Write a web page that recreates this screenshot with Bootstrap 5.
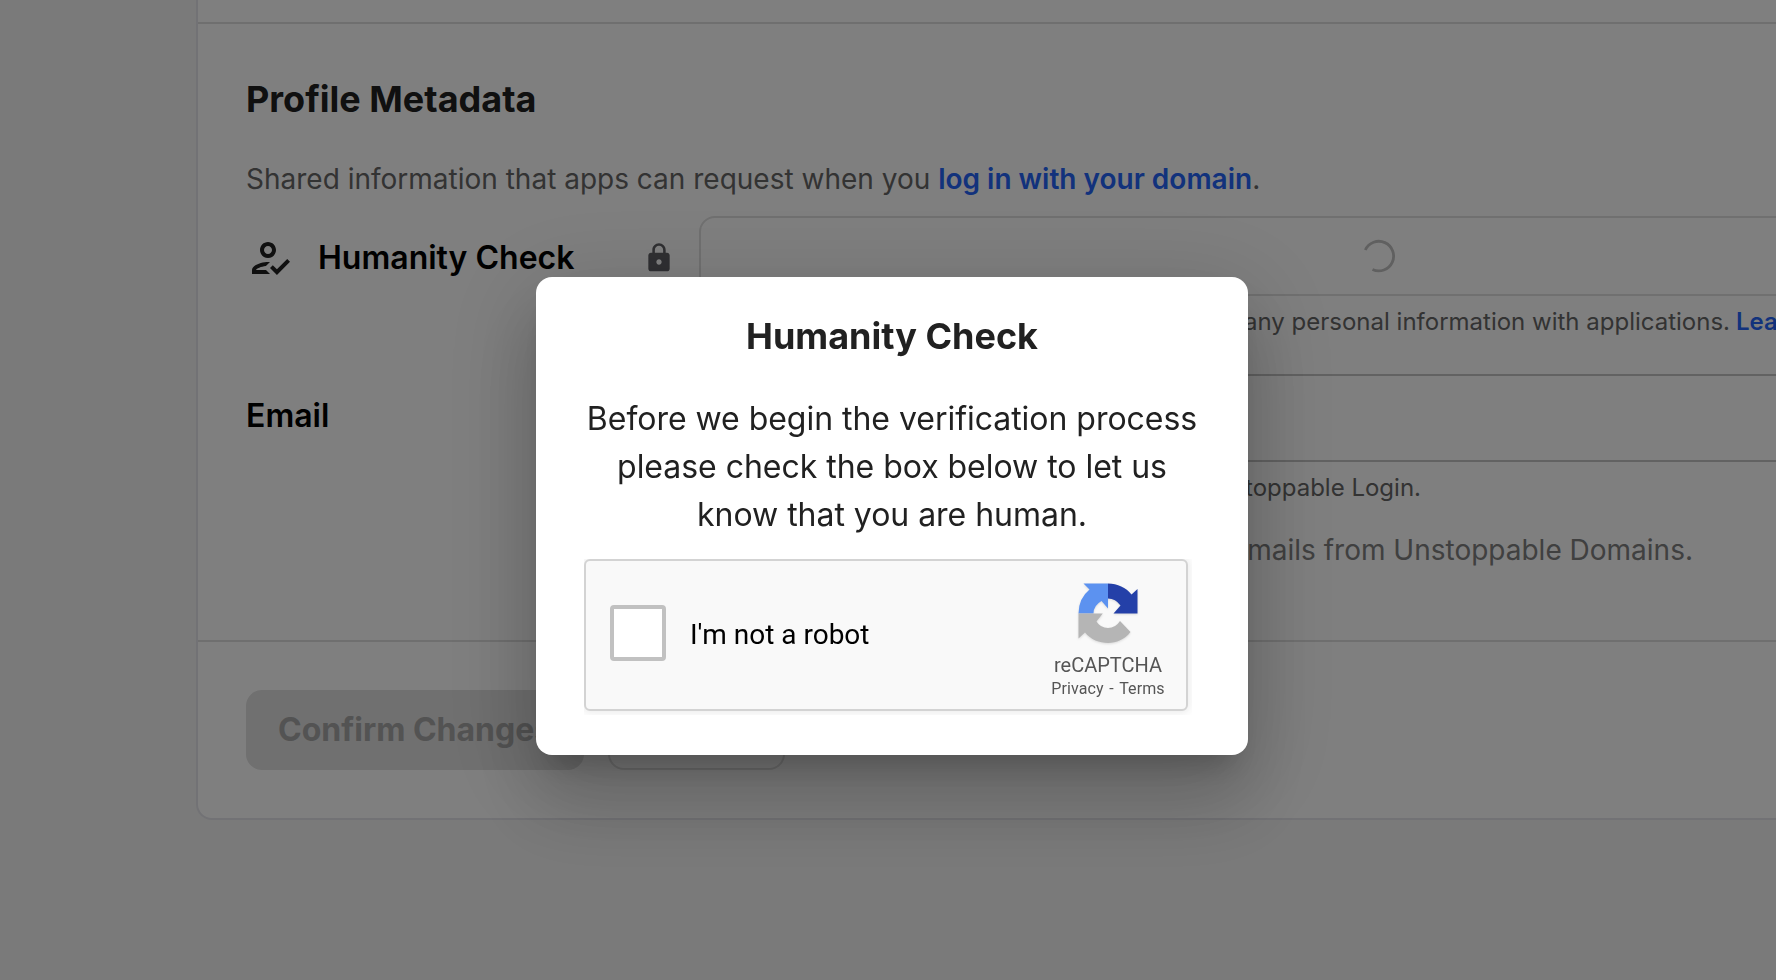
<!DOCTYPE html>
<html lang="en">
<head>
<meta charset="utf-8">
<title>Profile Metadata</title>
<meta name="viewport" content="width=device-width, initial-scale=1">
<link rel="stylesheet" href="https://cdn.jsdelivr.net/npm/bootstrap@5.3.0/dist/css/bootstrap.min.css">
<style>
  html, body { height: 100%; overflow: hidden; }
  body { font-family: Inter, "Liberation Sans", sans-serif; background: #f4f4f4; color: #212121; }
  .page { width: 2109px; padding-left: 196px; height: 980px; }
  .profile-card { border: 2px solid #e4e4ea; border-top: 0; border-radius: 0 0 16px 16px; background: #fff; height: 820px; }
  .prev-section { height: 24px; border-bottom: 2px solid #dfdfdf; }
  .meta-section { height: 618px; border-bottom: 2px solid #dfdfdf; padding: 48px 48px 0; }
  .section-title { font-size: 36px; line-height: 54px; font-weight: 700; }
  .intro { font-size: 28px; line-height: 42px; color: #666; margin: 32px 0 16px; white-space: nowrap; }
  .site-link { color: #2464f8; font-weight: 600; text-decoration: none; }
  .label-col { width: 453px; color: #000; font-size: 32px; line-height: 48px; font-weight: 600; flex: none; padding-top: 18px; }
  .label-name { margin-left: 24px; }
  .label-lock { margin-left: 69px; color: #5f5f64; }
  .check-field { height: 80px; border: 2px solid #e0e0e0; border-radius: 16px; }
  .email-row { margin-top: 32px; }
  .email-field { height: 88px; border: 2px solid #c4c4c4; border-radius: 8px; }
  .helper { font-size: 24px; line-height: 40px; color: #666; white-space: nowrap; padding-top: 6px; }
  .helper .site-link { margin-left: 6px; }
  .tail { flex: none; display: flex; justify-content: flex-end; }
  .consent { font-size: 28px; line-height: 42px; color: #808080; white-space: nowrap; margin-top: 21px; }
  .act { font-size: 32px; font-weight: 700; line-height: 48px; height: 80px; border-radius: 16px; padding: 0 32px; white-space: nowrap; }
  .act-main { width: 338px; background: #e0e0e0; color: #a6a6a6; }
  .act-alt { width: 177px; border: 2px solid #e0e0e0; color: #a6a6a6; }
  .scrim { background: rgba(0,0,0,.5); }
  .human-dialog { width: 712px; height: 478px; margin-top: 277px; margin-left: 536px; border-radius: 16px; background: #fff; padding: 32px 48px 0;
    box-shadow: 0 22px 30px -14px rgba(0,0,0,.2), 0 48px 76px 6px rgba(0,0,0,.14), 0 18px 92px 16px rgba(0,0,0,.12); }
  .dialog-title { font-size: 36px; line-height: 54px; font-weight: 700; margin: 0 0 32px; }
  .dialog-text { font-size: 32px; line-height: 48px; letter-spacing: -.03px; white-space: nowrap; margin: 0 0 20px; }
  .captcha-frame { width: 608px; height: 156px; overflow: hidden; font-family: Roboto, sans-serif; }
  .captcha-box { width: 604px; height: 152px; border: 2px solid #d3d3d3; border-radius: 6px; background: #f9f9f9; box-shadow: 0 0 8px 2px rgba(0,0,0,.08); padding-left: 24px; }
  .tick { width: 56px; height: 56px; border: 4px solid #c1c1c1; border-radius: 4px; background: #fff; margin-top: 44px; }
  .robot-label { font-size: 28px; line-height: 34px; color: #000; margin-left: 24px; }
  .brand-col { width: 116px; margin-right: 20px; color: #555; }
  .brand-logo { margin: 22px auto 0; filter: drop-shadow(0 1px 1px rgba(0,0,0,.12)); }
  .brand-name { font-size: 20px; line-height: 20px; margin-top: 11px; }
  .brand-links { font-size: 16px; line-height: 20px; white-space: nowrap; margin-top: 4px; letter-spacing: .12px; word-spacing: 1.5px; }
</style>
</head>
<body>
<div class="overflow-hidden w-100 h-100">
<main class="page">
  <div class="profile-card">
    <div class="prev-section"></div>
    <section class="meta-section">
      <h2 class="section-title mb-0">Profile Metadata</h2>
      <p class="intro">Shared information that apps can request when you <a class="site-link" href="#">log in with your domain</a>.</p>
      <div class="d-flex">
        <div class="label-col d-flex align-items-start">
          <svg width="48" height="48" viewBox="0 0 24 24" fill="#212121"><path d="M11 12c2.21 0 4-1.79 4-4s-1.79-4-4-4-4 1.79-4 4 1.79 4 4 4zm0-6c1.1 0 2 .9 2 2s-.9 2-2 2-2-.9-2-2 .9-2 2-2zm-1 12H5c.2-.63 2.57-1.68 4.96-1.94l2.04-2c-.39-.04-.68-.06-1-.06-2.67 0-8 1.34-8 4v2h9l-2-2zm10.6-5.5-5.13 5.17-2.07-2.08L12 17l3.47 3.5L22 13.91z"/></svg>
          <span class="label-name">Humanity Check</span>
          <svg class="label-lock mt-2" width="32" height="32" viewBox="0 0 24 24" fill="currentColor"><path d="M18 8h-1V6c0-2.76-2.24-5-5-5S7 3.24 7 6v2H6c-1.1 0-2 .9-2 2v10c0 1.1.9 2 2 2h12c1.1 0 2-.9 2-2V10c0-1.1-.9-2-2-2zm-6 9c-1.1 0-2-.9-2-2s.9-2 2-2 2 .9 2 2-.9 2-2 2zm3.1-9H8.9V6c0-1.71 1.39-3.1 3.1-3.1s3.1 1.39 3.1 3.1z"/></svg>
        </div>
        <div class="flex-grow-1">
          <div class="check-field d-flex align-items-center justify-content-center">
            <svg width="34" height="34" viewBox="0 0 34 34" fill="none" stroke="#c0c0c0" stroke-width="2.8"><path d="M3.3 11A14.8 14.8 0 1 1 10.5 30.5"/></svg>
          </div>
          <div class="helper d-flex">
            <span class="tail" style="width:1031px">Verify your identity without sharing any personal information with applications.</span>
            <a class="site-link" href="#">Learn more</a>
          </div>
        </div>
      </div>
      <div class="d-flex email-row">
        <div class="label-col">Email</div>
        <div class="flex-grow-1">
          <div class="email-field"></div>
          <div class="helper d-flex"><span class="tail" style="width:722px">Your email is used to sign in with Unstoppable Login.</span></div>
          <div class="consent d-flex"><span class="tail" style="width:994px">I want to receive emails from Unstoppable Domains.</span></div>
        </div>
      </div>
    </section>
    <div class="d-flex px-5 pt-5">
      <div class="act act-main d-flex align-items-center">Confirm Changes</div>
      <div class="act act-alt d-flex align-items-center ms-4">Cancel</div>
    </div>
  </div>
</main>
</div>
<div class="scrim position-fixed top-0 start-0 w-100 h-100">
  <div class="human-dialog" role="dialog">
    <h3 class="dialog-title text-center">Humanity Check</h3>
    <p class="dialog-text text-center">Before we begin the verification process<br>please check the box below to let us<br>know that you are human.</p>
    <div class="captcha-frame">
      <div class="captcha-box d-flex align-items-start">
        <div class="tick"></div>
        <span class="robot-label align-self-center">I'm not a robot</span>
        <div class="brand-col ms-auto text-center">
          <svg class="brand-logo d-block" width="60" height="61" viewBox="-.5 -.5 60 61">
            <path fill="#2440a8" d="M29.5 0C39 0 47.5 4 53 11L59 5.5V30H35L42 22Q37 15 29.5 15Z"/>
            <path fill="#5c92f0" d="M29.5 0H5L11 6Q0 15 0 30H15Q15 22 23 17.5L29.5 25Z"/>
            <path fill="#b5b5b5" d="M0 30H24.3L18 38Q22 44.5 29.5 44.5T41.5 37.5L52 48.5C46 56 38 59.5 29.5 59.5S12 56 6.5 49L0 55Z"/>
          </svg>
          <div class="brand-name">reCAPTCHA</div>
          <div class="brand-links">Privacy - Terms</div>
        </div>
      </div>
    </div>
  </div>
</div>
<script src="https://cdn.jsdelivr.net/npm/bootstrap@5.3.0/dist/js/bootstrap.bundle.min.js"></script>
</body>
</html>
